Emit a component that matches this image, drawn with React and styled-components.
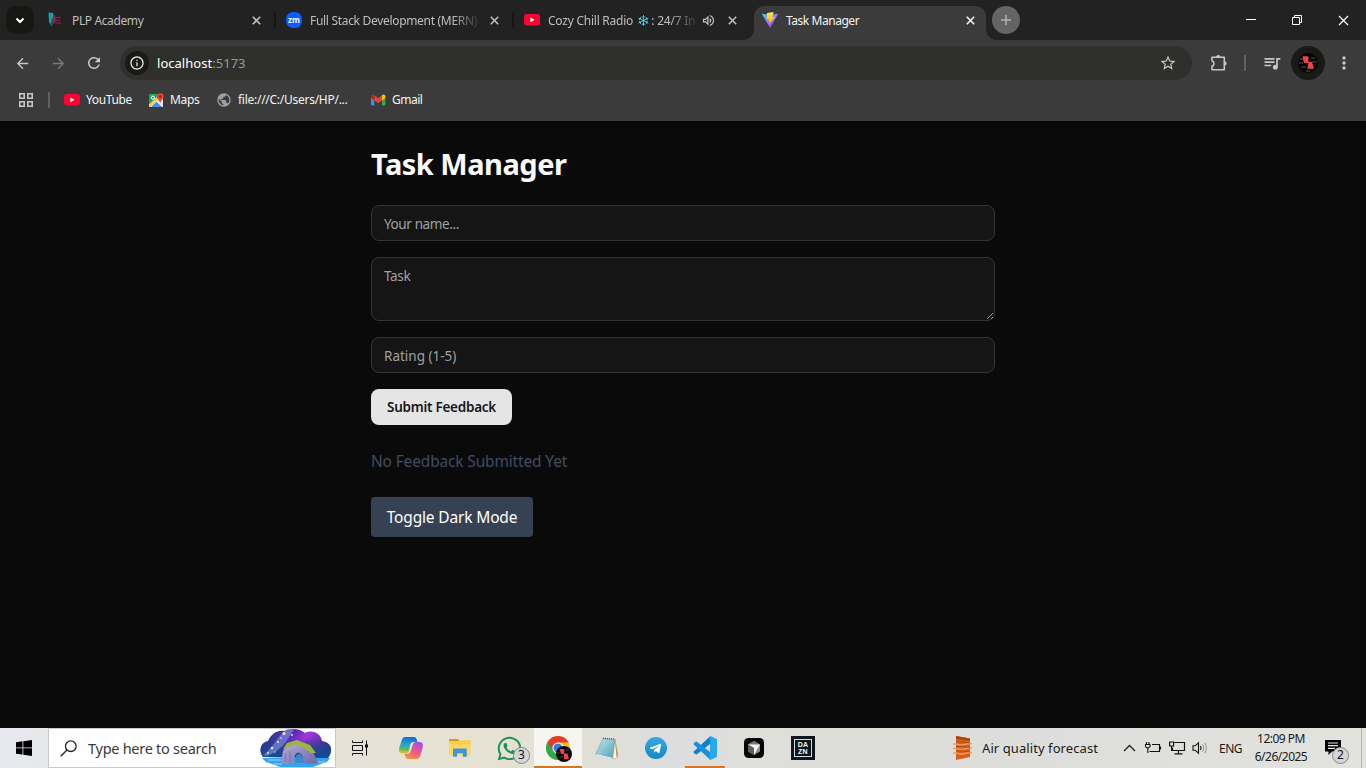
import React from 'react';
import styled, { createGlobalStyle, css } from 'styled-components';
import {
  MdArrowBack, MdArrowForward, MdRefresh, MdOutlineInfo, MdStarOutline,
  MdQueueMusic, MdOutlineVolumeUp, MdPublic,
} from 'react-icons/md';
import { FaWhatsapp, FaTelegramPlane } from 'react-icons/fa';

const Global = createGlobalStyle`
  *, *::before, *::after { box-sizing: border-box; }
  html, body { margin: 0; background: #0a0a0a; overflow: hidden; }
  body { font-family: "Noto Sans", "Open Sans", sans-serif; }
  svg { display: block; flex: none; overflow: visible; }
`;

const Screen = styled.div`
  width: 1366px;
  height: 768px;
  display: flex;
  flex-direction: column;
  background: #0a0a0a;
`;

/* ---------- Browser ---------- */
const TabStrip = styled.div`
  height: 40px;
  flex: none;
  display: flex;
  align-items: flex-start;
  padding: 6px 0 0 6px;
  background: #222222;
  color: #bfbfbf;
`;
const TabSearch = styled.div`
  width: 28px;
  height: 28px;
  border-radius: 10px;
  background: #171813;
  display: grid;
  place-items: center;
`;
const Tabs = styled.div`
  display: flex;
  padding-left: 6px;
`;
const Tab = styled.div`
  position: relative;
  width: 232px;
  height: 34px;
  margin-right: 6px;
  padding: 0 11px 6px 8px;
  display: flex;
  align-items: center;
  color: #bfbfbf;
  ${p => p.$divider && css`
    &::after {
      content: '';
      position: absolute;
      right: -4px;
      top: 6px;
      width: 2px;
      height: 16px;
      background: #161712;
    }
  `}
  ${p => p.$active && css`
    background: #3b3b3b;
    color: #f4f4f4;
    border-radius: 10px 10px 0 0;
    &::before, &::after {
      content: '';
      position: absolute;
      bottom: 0;
      width: 10px;
      height: 10px;
    }
    &::before { left: -10px; background: radial-gradient(circle at 0 0, transparent 9.5px, #3b3b3b 10px); }
    &::after { right: -10px; background: radial-gradient(circle at 100% 0, transparent 9.5px, #3b3b3b 10px); }
  `}
`;
const TabTitle = styled.span`
  flex: 1;
  margin: 0 0 0 8px;
  padding-top: 2px;
  white-space: nowrap;
  font-size: 12px;
  line-height: 18px;
  letter-spacing: ${p => p.$ls || 0}px;
  ${p => p.$fade && css`
    mask-image: linear-gradient(90deg, #000 ${p.$fade - 26}px, transparent ${p.$fade + 4}px);
  `}
`;
const Snow = styled.span`
  margin: 0 2px 0 1px;
  font-family: "DejaVu Sans", sans-serif;
  font-size: 15px;
  font-weight: 700;
  line-height: 12px;
  vertical-align: -1px;
  color: #4dd0e6;
  text-shadow: 0 0 1px #000, 0 0 2px #000;
`;
const AudioSlot = styled.span`
  margin-right: 12px;
`;
const NewTab = styled.div`
  width: 28px;
  height: 28px;
  border-radius: 50%;
  background: #646464;
  display: grid;
  place-items: center;
`;
const WindowControls = styled.div`
  margin-left: auto;
  display: flex;
  height: 28px;
  align-items: center;
`;
const WindowButton = styled.div`
  width: 46px;
  display: grid;
  place-items: center;
`;

const Toolbar = styled.div`
  height: 46px;
  flex: none;
  display: flex;
  align-items: center;
  padding: 0 0 0 4px;
  background: #3b3b3b;
  color: #c7c7c7;
`;
const ToolButton = styled.div`
  width: ${p => p.$w || 36}px;
  padding-left: ${p => p.$pl || 0}px;
  display: grid;
  place-items: center;
  opacity: ${p => (p.$dim ? 0.45 : 1)};
`;
const Omnibox = styled.div`
  width: 1072px;
  height: 34px;
  margin-left: 8px;
  padding: 0 15px 0 5px;
  display: flex;
  align-items: center;
  border-radius: 17px;
  background: #2f302b;
`;
const SiteInfo = styled.div`
  width: 24px;
  height: 24px;
  border-radius: 50%;
  background: #191a15;
  color: #e4e4e4;
  display: grid;
  place-items: center;
`;
const Url = styled.div`
  flex: 1;
  margin-left: 8px;
  font-size: 13px;
  line-height: 20px;
  letter-spacing: 0.03px;
  color: #ffffff;
  span { color: #96989a; }
`;
const Rule = styled.div`
  width: 2px;
  height: 16px;
  background: #606060;
`;
const Profile = styled.div`
  width: 34px;
  height: 34px;
  border-radius: 50%;
  background: #191a15;
  display: grid;
  place-items: center;
`;
const Bookmarks = styled.div`
  height: 35px;
  flex: none;
  display: flex;
  align-items: flex-start;
  background: #3b3b3b;
  border-bottom: 1px solid #3f3f3f;
  padding: 5px 0 0 18px;
`;
const BookmarkRow = styled.div`
  height: 18px;
  display: flex;
  align-items: center;
  color: #f4f4f4;
`;
const Bookmark = styled.div`
  width: ${p => p.$w}px;
  padding-left: ${p => p.$pl || 0}px;
  display: flex;
  align-items: center;
  gap: 6px;
  white-space: nowrap;
  font-size: 12px;
  line-height: 18px;
  letter-spacing: ${p => p.$ls || -0.36}px;
`;

/* ---------- Page ---------- */
const Page = styled.main`
  flex: 1;
  background: #0a0a0a;
  border-top: 1px solid #050505;
`;
const Container = styled.div`
  width: 672px;
  margin: 0 auto;
  padding: 23px 24px;
`;
const Title = styled.h1`
  margin: 0 0 24px;
  height: 36px;
  font-size: 29px;
  line-height: 37px;
  font-weight: 700;
  letter-spacing: -0.5px;
  color: #fafafa;
`;
const Form = styled.form`
  display: flex;
  flex-direction: column;
  gap: 16px;
  align-items: flex-start;
`;
const field = css`
  display: block;
  width: 100%;
  border: 1px solid #343434;
  border-radius: 8px;
  background: #151515;
  padding: 0 12px;
  font-family: inherit;
  font-size: 13.5px;
  letter-spacing: ${p => p.$ls || 0}px;
  color: #fafafa;
  color-scheme: dark;
  outline: none;
  &::placeholder { color: #a1a1a1; opacity: 1; }
`;
const Input = styled.input`
  ${field}
  height: 36px;
  padding-top: 2px;
`;
const TextArea = styled.textarea`
  ${field}
  height: 64px;
  padding-top: 8px;
  line-height: 20px;
  resize: vertical;
`;
const Submit = styled.button`
  width: 141px;
  height: 36px;
  padding: 0 0 1px;
  border: 0;
  border-radius: 8px;
  background: #e5e5e5;
  color: #171717;
  font-family: inherit;
  font-size: 13.5px;
  font-weight: 600;
  letter-spacing: -0.25px;
  white-space: nowrap;
`;
const Empty = styled.p`
  margin: 24px 0;
  font-size: 15.5px;
  line-height: 24px;
  letter-spacing: -0.16px;
  color: #404c60;
`;
const Toggle = styled.button`
  width: 162px;
  height: 40px;
  padding: 0;
  border: 0;
  border-radius: 4px;
  background: #364153;
  color: #ffffff;
  font-family: inherit;
  font-size: 15.5px;
  letter-spacing: -0.16px;
  white-space: nowrap;
`;

/* ---------- Taskbar ---------- */
const Taskbar = styled.footer`
  height: 40px;
  flex: none;
  display: flex;
  background: linear-gradient(90deg, #e8e9ee 0, #e7e8ea 48px, #e6e2d8 345px, #e6e2d3 480px, #e0dfd7 600px, #dddde0 670px, #dedfda 740px, #dddedb 1000px, #e2e3df 1366px);
  color: #1b1b1b;
`;
const Start = styled.div`
  width: 48px;
  display: grid;
  place-items: center;
`;
const Search = styled.div`
  width: 288px;
  display: flex;
  align-items: center;
  padding-left: 11px;
  background: #ffffff;
  border: 1px solid #c9c9c9;
  color: #3a3a3a;
`;
const SearchText = styled.span`
  width: 172px;
  margin-left: 11px;
  font-size: 14.5px;
  letter-spacing: -0.27px;
  white-space: nowrap;
`;
const TaskView = styled.div`
  width: 51px;
  display: flex;
  align-items: center;
  padding-left: 15px;
`;
const TaskButton = styled.div`
  position: relative;
  width: 48px;
  margin-right: 1px;
  display: grid;
  place-items: center;
  background: ${p => (p.$active ? '#f6f5f1' : 'transparent')};
  ${p => p.$bar && css`
    &::after {
      content: '';
      position: absolute;
      bottom: 0;
      left: calc(50% - ${p.$bar / 2}px);
      width: ${p.$bar}px;
      height: 2px;
      background: #d17828;
    }
  `}
`;
const Count = styled.span`
  position: absolute;
  left: ${p => p.$x}px;
  top: ${p => p.$y}px;
  width: 17px;
  height: 17px;
  border: 1px solid #85878a;
  border-radius: 50%;
  background: #d4d5d4;
  color: #111111;
  font-size: 12px;
  line-height: 14px;
  text-align: center;
`;
const Dazn = styled.div`
  width: 24px;
  height: 24px;
  padding: 3px;
  background: #0c161c;
`;
const DaznFrame = styled.div`
  width: 18px;
  height: 18px;
  padding-top: 2px;
  border: 1px solid #d6dadb;
  color: #f8f8f8;
  font: 700 7px/6.5px "Liberation Sans", sans-serif;
  letter-spacing: 0.3px;
  text-align: center;
`;
const Tray = styled.div`
  margin-left: auto;
  display: flex;
  align-items: center;
`;
const Weather = styled.div`
  width: 171px;
  display: flex;
  align-items: center;
  gap: 9px;
  font-size: 13px;
  letter-spacing: 0.08px;
  white-space: nowrap;
`;
const TrayIcon = styled.div`
  width: ${p => p.$w}px;
  display: flex;
`;
const Lang = styled.div`
  width: 31px;
  font-size: 12px;
  letter-spacing: -0.5px;
`;
const Clock = styled.div`
  width: 62px;
  font-size: 12px;
  line-height: 18px;
  letter-spacing: -0.5px;
  text-align: center;
  white-space: nowrap;
`;
const Notices = styled.div`
  position: relative;
  width: 49px;
  height: 40px;
  padding: 12px 0 0 13px;
`;
const Desktop = styled.div`
  width: 5px;
  height: 40px;
  border-left: 1px solid #b5b5b2;
`;

/* ---------- Drawings ---------- */
const Close = ({ size = 9, color = 'currentColor', w = 1.6 }) => (
  <svg width={size} height={size} viewBox="0 0 9 9"><path d="M.8.8l7.4 7.4M8.2.8L.8 8.2" stroke={color} strokeWidth={w} /></svg>
);
const PlpIcon = () => (
  <svg width="16" height="16" viewBox="0 0 16 16">
    <path d="M.5.5L5 1v4L4 8l-.5 6L1 10z" fill="#13a3a8" />
    <path d="M4 6l1 2-1 7.5-1.5-5z" fill="#0b6c78" />
    <path d="M5 1.5q3.500 2 2.500 8l-3 4 .5-5z" fill="#a51b52" />
    <path d="M7.5 5.500H13M8 8.300h4M7.500 11H13" stroke="#7a2146" strokeWidth="1.3" />
  </svg>
);
const ZoomIcon = () => (
  <svg width="16" height="16" viewBox="0 0 16 16">
    <rect width="16" height="16" rx="7" fill="#0b5cff" />
    <text x="8" y="10.7" textAnchor="middle" fontFamily="Open Sans, sans-serif" fontWeight="700" fontSize="8" fill="#fff">zm</text>
  </svg>
);
const YouTubeIcon = () => (
  <svg width="16" height="16" viewBox="0 0 16 16">
    <rect y="2" width="16" height="11.6" rx="3" fill="#ff0033" />
    <path d="M6.4 5.4v4.8l4.2-2.4z" fill="#fff" />
  </svg>
);
const ViteIcon = () => (
  <svg width="16" height="16" viewBox="0 0 16 16">
    <defs>
      <linearGradient id="va" x1="0" y1="0" x2=".7" y2="1"><stop stopColor="#41d1ff" /><stop offset="1" stopColor="#bd34fe" /></linearGradient>
      <linearGradient id="vb" x1=".4" y1="0" x2=".5" y2="1"><stop stopColor="#ffea83" /><stop offset=".2" stopColor="#ffdd35" /><stop offset="1" stopColor="#ffa800" /></linearGradient>
    </defs>
    <path d="M15.8 2.4L8.4 15.6a.4.4 0 0 1-.7 0L.2 2.4a.4.4 0 0 1 .4-.6l7.4 1.3 7.4-1.3a.4.4 0 0 1 .4.6z" fill="url(#va)" />
    <path d="M11.5 0L5 1.100 4.800 7.300l2-.3-.5 2.200 1.500-.4-.7 3.200c0 .3.300.3.400.1L13 4.700l-2.700.3 1-3z" fill="url(#vb)" />
  </svg>
);
const MapsIcon = () => (
  <svg width="15" height="15" viewBox="0 0 15 15">
    <rect y="1" width="14" height="13" rx="1" fill="#1fa463" />
    <path d="M0 14L12 3l2 2v9z" fill="#e8eaed" />
    <path d="M2 14l5.5-5.3L13 14z" fill="#4c8bf5" />
    <path d="M0 11.5L9 3l2 2-9 9H1q-1 0-1-1z" fill="#ffd04b" />
    <circle cx="4" cy="4.7" r="1.6" fill="none" stroke="#fff" strokeWidth="1" />
    <path d="M7.8 3.6a3.4 3.4 0 0 1 6.8 0c0 2.6-2.8 3.5-3.4 7-.6-3.5-3.4-4.4-3.4-7z" fill="#ea4335" />
    <circle cx="11.2" cy="3.5" r="1.2" fill="#8c1f17" />
  </svg>
);
const GmailIcon = () => (
  <svg width="15" height="12" viewBox="0 0 15 12">
    <path d="M0 2v8.5q0 1 1 1h2.4V5z" fill="#4285f4" />
    <path d="M14.4 2v8.5q0 1-1 1H11V5z" fill="#34a853" />
    <path d="M3.4 1.2v5.2L7.2 9.2 11 6.4V1.2L7.2 4.2z" fill="#ea4335" />
    <path d="M0 2.2C0 .8 1.6 0 2.8.8l.6.4v5.2L0 3.9z" fill="#c5221f" />
    <path d="M14.4 2.2c0-1.4-1.6-2.2-2.8-1.4l-.6.4v5.2l3.4-2.5z" fill="#fbbc04" />
  </svg>
);
const AppsIcon = () => (
  <svg width="16" height="16" viewBox="0 0 16 16" fill="none" stroke="#c7c7c7" strokeWidth="1.6">
    <path d="M1.8 1.8h4.4v4.4H1.8zM9.8 1.8h4.4v4.4H9.8zM1.8 9.8h4.4v4.4H1.8zM9.8 9.8h4.4v4.4H9.8z" />
  </svg>
);
const PuzzleIcon = () => (
  <svg width="18" height="18" viewBox="0 0 18 18">
    <path d="M2 3.3h12.3v12.4H2v-3.4c2.6-1 2.6-4.6 0-5.6z" fill="none" stroke="#c7c7c7" strokeWidth="1.6" strokeLinejoin="round" />
    <path d="M6.2 3a2.1 2.1 0 0 1 4.2 0zM14.6 7.4a2.1 2.1 0 0 1 0 4.2z" fill="#c7c7c7" />
  </svg>
);
const Avatar = ({ size = 20 }) => (
  <svg width={size} height={size} viewBox="0 0 20 20">
    <circle cx="10" cy="10" r="10" fill="#050505" />
    <path d="M2 6h4M13 5h4M1 10h4M14 9h5M3 14h5M8 18h4" stroke="#7a7a7a" strokeWidth=".7" />
    <path d="M4.500 3.300h5.500l.8 2-.8 1.400 1 3.300H6.200L5.400 7.800z" fill="#f04348" />
    <path d="M10.500 9h3.500l2 6.700H9.200l.8-3z" fill="#f04348" />
  </svg>
);
const SearchArt = () => (
  <svg width="72" height="38" viewBox="0 0 72 38">
    <defs>
      <linearGradient id="sky" x1="0" y1=".3" x2="1" y2=".7"><stop stopColor="#22417f" /><stop offset=".35" stopColor="#5a2ab5" /><stop offset=".55" stopColor="#a534dd" /><stop offset="1" stopColor="#263783" /></linearGradient>
      <linearGradient id="dusk" x1="0" y1="0" x2="0" y2="1"><stop offset=".3" stopColor="#193c7d" stopOpacity="0" /><stop offset=".85" stopColor="#164a94" /></linearGradient>
      <linearGradient id="rock" x1="0" y1="0" x2="1" y2="1"><stop stopColor="#b9b2df" /><stop offset="1" stopColor="#6e64a4" /></linearGradient>
    </defs>
    <path d="M3 28C-2 21 1 13 8 12 11 5 17 1 24 2 29-1 40-1 45 4c8-4 16 1 17 8 9 1 12 9 6 17z" fill="url(#sky)" />
    <path d="M3 28C-2 21 1 13 8 12 11 5 17 1 24 2 29-1 40-1 45 4c8-4 16 1 17 8 9 1 12 9 6 17z" fill="url(#dusk)" />
    <path d="M3 26C12 20 16 9 27 0h7C28 10 23 21 7 27z" fill="#86a4e8" opacity=".55" />
    <path d="M2 29h68l-3 4-6 2-8 3H20l-8-3-6-2z" fill="#35a3ee" />
    <path d="M8 31h13M56 33h9M14 35h8" stroke="#9bd9ff" />
    <path d="M21 35l2-13 4-7 10-2 12 4 5 8 4 9-12 1-4-9q-4-5-7 0l-2 9z" fill="url(#rock)" />
    <path d="M35 34l1-7q3-4 6 0l3 7z" fill="#3f86cf" />
    <path d="M23 20l4-6 10-3 13 5 6 8h-5l-5-4-6-2-4-3-5 2-4 2z" fill="#9cb540" />
    <path d="M26 24l-1 9M30 22v10M50 25l3 8" stroke="#7d73ad" strokeWidth="1" fill="none" />
    <g fill="#ffe7b8"><circle cx="12" cy="19" r="1.3" /><circle cx="18" cy="13" r="1" /><circle cx="24" cy="4.5" r="1.5" /><circle cx="8" cy="24" r=".9" /><circle cx="21" cy="9" r=".8" /><circle cx="32" cy="6" r=".9" /><circle cx="15" cy="23" r=".7" /></g>
  </svg>
);
const TaskViewIcon = () => (
  <svg width="18" height="16" viewBox="0 0 18 16" fill="none" stroke="#111" strokeWidth="1">
    <path d="M1.5.5v2h10v-2M1.5 15.500v-2h10v2M1.500 5.500h10v5h-10zM15.500.5v15" />
    <path d="M14 4.500h3v3h-3z" fill="#111" stroke="none" />
  </svg>
);
const CopilotIcon = () => (
  <svg width="26" height="24" viewBox="0 0 26 24">
    <defs>
      <linearGradient id="ca" x1=".4" y1="0" x2=".3" y2="1"><stop stopColor="#1468d8" /><stop offset=".45" stopColor="#20a9d2" /><stop offset=".75" stopColor="#5dbb5c" /><stop offset="1" stopColor="#f1c62e" /></linearGradient>
      <linearGradient id="cb" x1=".7" y1="0" x2=".3" y2="1"><stop stopColor="#9d50e6" /><stop offset=".5" stopColor="#ee558d" /><stop offset="1" stopColor="#f8953e" /></linearGradient>
    </defs>
    <path d="M7.5 1h8.2q2.3 0 3 2.2l.8 2.7h-3q-2.2 0-3 2.5L11 15.5q-.7 2-2.8 2H4.5C.8 17.5.6 14.3 1.5 11L4 3.4Q4.8 1 7.5 1z" fill="url(#ca)" />
    <path d="M18.5 23h-8.2q-2.3 0-3-2.2l-.6-3.1h2.1q2.2 0 3-2.5l2.6-7.4q.7-1.9 2.8-1.9h4.3c3.7 0 3.9 3.2 3 6.5L22 20.6q-.8 2.4-3.5 2.4z" fill="url(#cb)" />
    <path d="M12.3 8.5q.8-2.6 3.2-2.6h1.5q-1.500.4-2.200 2.500l-2.200 6.800q-.7 2.300-2.600 2.500H8.300q2-.3 2.700-2.500z" fill="#eee9dc" />
  </svg>
);
const FolderIcon = () => (
  <svg width="23" height="20" viewBox="0 0 23 20">
    <path d="M0 1h9l2 2.500H0z" fill="#d89a16" />
    <path d="M0 3.500h21.500v14H0z" fill="#ffd75e" />
    <path d="M0 3.500h9l2-1.300h10.500V6H0z" fill="#fbcb4f" />
    <path d="M4 18.700v-7.200q0-.9.9-.9h12q.9 0 .9.900v7.200h-4v-3.500H8v3.500z" fill="#3b96dc" />
  </svg>
);
const ChromeIcon = () => (
  <svg width="24" height="24" viewBox="0 0 24 24">
    <circle cx="12" cy="12" r="12" fill="#fbc116" />
    <path d="M12 12L1.600 6A12 12 0 0 0 11.500 24l5.700-9z" fill="#2da94f" />
    <path d="M12 6.500h10.700L22.400 6A12 12 0 0 0 1.600 6l5.600 8.700z" fill="#e33b2e" />
    <circle cx="12" cy="12" r="5.600" fill="#fff" />
    <circle cx="12" cy="12" r="4.500" fill="#347be5" />
    <g transform="translate(10 10)"><circle cx="8" cy="8" r="8" fill="#080808" /><path d="M3.500 3h4.500l.5 2-.5 3H5zM8 7.500h3.500l1.500 5.700H8z" fill="#ee4247" /><path d="M1.500 7h2M10 4h3M4 11h3" stroke="#777" strokeWidth=".6" /></g>
  </svg>
);
const NotepadIcon = () => (
  <svg width="24" height="23" viewBox="0 0 24 23">
    <defs><linearGradient id="np" x1="0" y1="0" x2="1" y2="1"><stop stopColor="#c4e9ec" /><stop offset="1" stopColor="#4fa0b7" /></linearGradient></defs>
    <path d="M20 2l3 18-3 2-3-1z" fill="#f5f3ec" stroke="#a49e90" strokeWidth=".6" />
    <path d="M8 1.500L20 2.500 17.500 21.500.6 17.500z" fill="url(#np)" stroke="#7a99a2" strokeWidth=".6" />
    <path d="M8 1.300l12 .8" stroke="#64666a" strokeWidth="1.500" strokeDasharray="1 1" />
    <path d="M20 3l3 14-1.500 4z" fill="#c89251" />
    <path d="M1 17.600l16.400 3.800" stroke="#f3f7f7" />
  </svg>
);
const TelegramMark = styled.div`
  width: 22px;
  height: 22px;
  border-radius: 50%;
  display: grid;
  place-items: center;
  padding-right: 2px;
  background: linear-gradient(#34aadf, #1687c8);
  color: #ffffff;
`;
const CodeIcon = () => (
  <svg width="24" height="24" viewBox="0 0 24 24">
    <path d="M17.500 0L24 3v18l-6.500 3z" fill="#27a8f2" />
    <path d="M17.500 0L1 15.300q-.8.900 0 1.700l1.500 1.300q.7.400 1.300 0L18 7.200z" fill="#0f7fcb" />
    <path d="M17.500 24L1 8.700q-.8-.9 0-1.700l1.500-1.300q.7-.4 1.300 0L18 16.800z" fill="#1690dc" />
    <path d="M17.500 0L18 .2V24l-.5 0-1-1z" fill="#27a8f2" />
  </svg>
);
const CursorIcon = () => (
  <svg width="20" height="20" viewBox="0 0 20 20">
    <rect width="20" height="20" rx="4.500" fill="#050505" />
    <path d="M10 3l6 3.400v7L10 17l-6-3.600v-7z" fill="#8d8d8d" />
    <path d="M4 6.400L10 3l6 3.400z" fill="#777" />
    <path d="M4 6.400h12L10 17V10z" fill="#f4f4f4" />
    <path d="M4 6.400L10 10v7l-6-3.600z" fill="#5e5e5e" />
  </svg>
);
const WeatherIcon = () => (
  <svg width="21" height="24" viewBox="0 0 21 24">
    <path d="M4 0l14 2.500V21L4 24z" fill="#d8601a" />
    <path d="M4 0l14 2.500v2.300L4 3z" fill="#a94410" />
    <path d="M1 8h3q6 2 13-.5h3M1 12.500h3q6 2 13-.5h3M1 17h3q6 2 13-.5h3" fill="none" stroke="#f39a5c" strokeWidth="1.500" />
    <path d="M4 6q6-1 14 1M4 10.500q6-1 14 1M4 15q6-1 14 1" fill="none" stroke="#9c3f10" strokeWidth=".7" />
  </svg>
);

const Browser = () => (
  <>
    <TabStrip>
      <TabSearch><svg width="10" height="7" viewBox="0 0 10 7"><path d="M1.500 1.500L5 5l3.500-3.500" fill="none" stroke="#fff" strokeWidth="2" /></svg></TabSearch>
      <Tabs>
        <Tab $divider><PlpIcon /><TabTitle $ls={-0.38}>PLP Academy</TabTitle><Close /></Tab>
        <Tab $divider><ZoomIcon /><TabTitle $ls={-0.31} $fade={168}>Full Stack Development (MERN)</TabTitle><Close /></Tab>
        <Tab><YouTubeIcon /><TabTitle $ls={-0.24} $fade={147}>Cozy Chill Radio <Snow>❄</Snow>: 24/7 In</TabTitle><AudioSlot><MdOutlineVolumeUp size={15} /></AudioSlot><Close /></Tab>
        <Tab $active><ViteIcon /><TabTitle $ls={-0.45}>Task Manager</TabTitle><Close /></Tab>
      </Tabs>
      <NewTab><svg width="12" height="12" viewBox="0 0 12 12"><path d="M6 1v10M1 6h10" stroke="#b5b5b5" strokeWidth="1.400" /></svg></NewTab>
      <WindowControls>
        <WindowButton><svg width="10" height="10"><path d="M0 4.500h10" stroke="#fff" /></svg></WindowButton>
        <WindowButton><svg width="10" height="10" fill="none" stroke="#fff"><path d="M.5 2.500h7v7h-7zM2.500 2.500v-2h7v7h-2" /></svg></WindowButton>
        <WindowButton><Close size={11} color="#fff" w={1} /></WindowButton>
      </WindowControls>
    </TabStrip>
    <Toolbar>
      <ToolButton><MdArrowBack size={17} /></ToolButton>
      <ToolButton $dim><MdArrowForward size={17} /></ToolButton>
      <ToolButton><MdRefresh size={18} /></ToolButton>
      <Omnibox>
        <SiteInfo><MdOutlineInfo size={16} /></SiteInfo>
        <Url>localhost<span>:5173</span></Url>
        <MdStarOutline size={18} />
      </Omnibox>
      <ToolButton $w={52} $pl={2}><PuzzleIcon /></ToolButton>
      <Rule />
      <ToolButton $w={45} $pl={7}><MdQueueMusic size={20} /></ToolButton>
      <Profile><Avatar /></Profile>
      <ToolButton $w={38}><svg width="4" height="14" viewBox="0 0 4 14" fill="#c7c7c7"><circle cx="2" cy="2" r="1.700" /><circle cx="2" cy="7" r="1.700" /><circle cx="2" cy="12" r="1.700" /></svg></ToolButton>
    </Toolbar>
    <Bookmarks>
      <BookmarkRow>
        <Bookmark $w={30}><AppsIcon /></Bookmark>
        <Rule />
        <Bookmark $w={99} $pl={14}><YouTubeIcon />YouTube</Bookmark>
        <Bookmark $w={67}><MapsIcon />Maps</Bookmark>
        <Bookmark $w={155} $ls={-0.27}><MdPublic size={16} color="#9aa0a6" />file:///C:/Users/HP/...</Bookmark>
        <Bookmark $w={60} $ls={-0.5}><GmailIcon />Gmail</Bookmark>
      </BookmarkRow>
    </Bookmarks>
  </>
);

const TaskManager = () => (
  <Page>
    <Container>
      <Title>Task Manager</Title>
      <Form onSubmit={e => e.preventDefault()}>
        <Input placeholder="Your name..." $ls={-0.38} />
        <TextArea placeholder="Task" $ls={-0.35} />
        <Input placeholder="Rating (1-5)" />
        <Submit type="submit">Submit Feedback</Submit>
      </Form>
      <Empty>No Feedback Submitted Yet</Empty>
      <Toggle type="button">Toggle Dark Mode</Toggle>
    </Container>
  </Page>
);

const WindowsTaskbar = () => (
  <Taskbar>
    <Start><svg width="16" height="16" viewBox="0 0 16 16"><path d="M0 2.200l6.500-.9v6.200H0zM7.300 1.200L16 0v7.500H7.300zM0 8.300h6.500v6.300L0 13.700zM7.300 8.300H16V16l-8.700-1.200z" fill="#000" /></svg></Start>
    <Search>
      <svg width="17" height="17" viewBox="0 0 17 17" fill="none" stroke="#222" strokeWidth="1.300"><circle cx="10.800" cy="6.200" r="5.300" /><path d="M7 10L.7 16.300" /></svg>
      <SearchText>Type here to search</SearchText>
      <SearchArt />
    </Search>
    <TaskView><TaskViewIcon /></TaskView>
    <TaskButton><CopilotIcon /></TaskButton>
    <TaskButton><FolderIcon /></TaskButton>
    <TaskButton><FaWhatsapp size={27} color="#1f9157" /><Count $x={28} $y={19}>3</Count></TaskButton>
    <TaskButton $active $bar={48}><ChromeIcon /></TaskButton>
    <TaskButton><NotepadIcon /></TaskButton>
    <TaskButton><TelegramMark><FaTelegramPlane size={13} /></TelegramMark></TaskButton>
    <TaskButton $bar={40}><CodeIcon /></TaskButton>
    <TaskButton><CursorIcon /></TaskButton>
    <TaskButton><Dazn><DaznFrame>DA<br />ZN</DaznFrame></Dazn></TaskButton>
    <Tray>
      <Weather><WeatherIcon />Air quality forecast</Weather>
      <TrayIcon $w={22}><svg width="13" height="8" viewBox="0 0 13 8"><path d="M1 7l5.500-5.500L12 7" fill="none" stroke="#222" strokeWidth="1.400" /></svg></TrayIcon>
      <TrayIcon $w={24}><svg width="17" height="12" viewBox="0 0 17 12" fill="none" stroke="#111" strokeWidth="1.100"><path d="M7 2.500h7.500v7H4.500M15.500 4.500v3M1.500 0v2.500M4 0v2.500M.5 2.500H5v2l-1.200 1.300H1.700L.5 4.500zM2.800 6v5" /></svg></TrayIcon>
      <TrayIcon $w={23}><svg width="17" height="14" viewBox="0 0 17 14" fill="none" stroke="#111" strokeWidth="1.200"><path d="M5.500 1.500h10v8h-12v-3M.6 1h4v4h-4zM2.600 5v5M9.500 9.500v3M5.500 12.800h8" /></svg></TrayIcon>
      <TrayIcon $w={27}><svg width="17" height="14" viewBox="0 0 17 14" fill="none" stroke="#111" strokeWidth="1.100"><path d="M1 4.800h2.200l3.300-3v10.400l-3.300-3H1z" /><path d="M8.500 5q1 2 0 4" /><path d="M10.500 3.300q2.200 3.700 0 7.400M12.800 1.700q3.200 5.300 0 10.600" stroke="#999" /></svg></TrayIcon>
      <Lang>ENG</Lang>
      <Clock>12:09 PM<br />6/26/2025</Clock>
      <Notices>
        <svg width="16" height="16" viewBox="0 0 16 16"><path d="M0 0h16v11.500H7L3.500 15v-3.500H0z" fill="#000" /><path d="M3 3h10M3 5.700h10M3 8.400h7" stroke="#e6e6e3" strokeWidth="1.200" /></svg>
        <Count $x={20} $y={19}>2</Count>
      </Notices>
      <Desktop />
    </Tray>
  </Taskbar>
);

export default function App() {
  return (
    <Screen>
      <Global />
      <Browser />
      <TaskManager />
      <WindowsTaskbar />
    </Screen>
  );
}
